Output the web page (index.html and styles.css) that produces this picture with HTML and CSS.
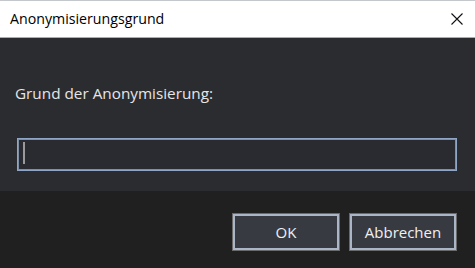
FILE: index.html
```html
<!DOCTYPE html>
<html lang="de">
<head>
    <meta charset="UTF-8">
    <title>Anonymisierungsgrund</title>
    <link rel="stylesheet" href="styles.css">
</head>
<body>
    <div class="window">
        <div class="titlebar">
            <span class="title">Anonymisierungsgrund</span>
            <span class="close">
                <svg width="12" height="12" viewBox="0 0 12 12">
                    <path d="M0.5 0.5 L11.5 11.5 M11.5 0.5 L0.5 11.5" stroke="#111" stroke-width="1.1" fill="none"/>
                </svg>
            </span>
        </div>
        <div class="content">
            <label for="reason">Grund der Anonymisierung:</label>
            <div class="input-box">
                <span class="caret"></span>
                <input type="text" id="reason">
            </div>
        </div>
        <div class="footer">
            <button class="btn">OK</button>
            <button class="btn">Abbrechen</button>
        </div>
    </div>
</body>
</html>
```

FILE: styles.css
```css
html, body {
    margin: 0;
    padding: 0;
    background-color: #202020;
}

body {
    font-family: "Open Sans", "Noto Sans", sans-serif;
}

.window {
    width: 475px;
    height: 268px;
    display: flex;
    flex-direction: column;
}

.titlebar {
    height: 36px;
    background-color: #fff;
    border-top: 1px solid #c4c8cc;
    border-bottom: 1px solid #a9acb0;
    display: flex;
    align-items: center;
    justify-content: space-between;
    padding: 0 12px 0 10px;
}

.title {
    font-size: 14.2px;
    color: #000;
    margin-top: -1px;
}

.close {
    display: flex;
    width: 12px;
    height: 12px;
    margin-right: 0;
}

.content {
    height: 153px;
    background-color: #2b2c30;
    padding: 0 18px 0 17px;
    box-sizing: border-box;
}

.content label {
    display: block;
    color: #e6e6e6;
    font-size: 15.3px;
    margin-top: 44px;
    margin-left: -2px;
    line-height: 22px;
}

.input-box {
    margin-top: 34px;
    height: 33px;
    box-sizing: border-box;
    border: 1px solid #8fa6c6;
    box-shadow: inset 0 0 0 1px #7e8fa8;
    position: relative;
    background-color: #2a2b30;
}

.input-box input {
    width: 100%;
    height: 100%;
    border: none;
    background: transparent;
    outline: none;
    color: #eee;
    padding: 0 8px;
    box-sizing: border-box;
}

.caret {
    position: absolute;
    left: 5px;
    top: 3px;
    width: 2px;
    height: 22px;
    background-color: #9a9a9a;
}

.footer {
    flex: 1;
    background-color: #202020;
    display: flex;
    justify-content: flex-end;
    align-items: flex-start;
    gap: 9px;
    padding: 22px 18px 0 0;
}

.btn {
    width: 108px;
    height: 38px;
    box-sizing: border-box;
    background-color: #383a42;
    color: #f0f0f0;
    font-family: "Open Sans", "Noto Sans", sans-serif;
    font-size: 15px;
    border: 1px solid #6a6a6a;
    box-shadow: inset 0 0 0 2px #aab6c8;
    padding: 0;
    cursor: pointer;
}
```
